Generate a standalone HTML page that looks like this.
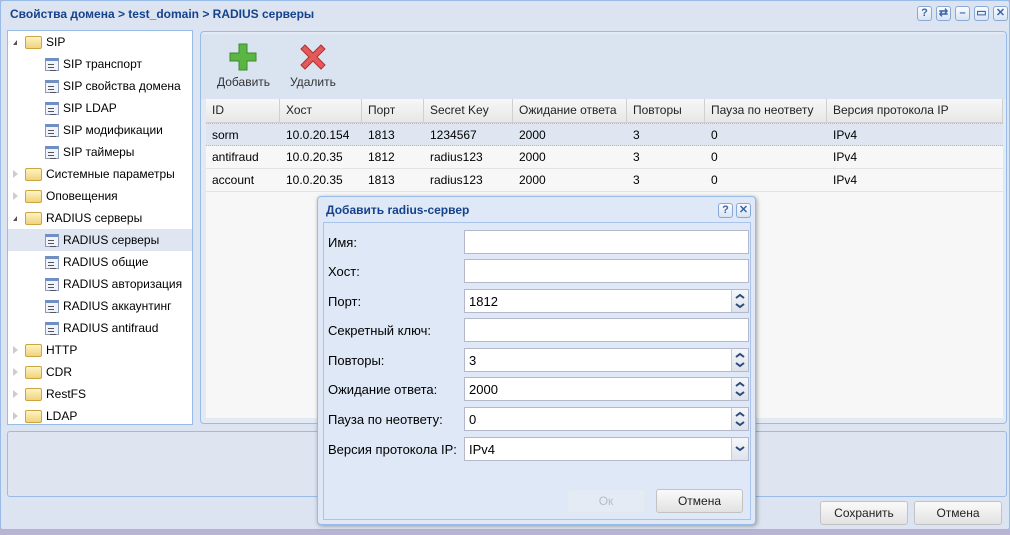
<!DOCTYPE html>
<html><head><meta charset="utf-8"><style>
*{box-sizing:border-box;margin:0;padding:0}
body{width:1010px;height:535px;overflow:hidden;background:#b9b4d4;font-family:"Liberation Sans",sans-serif;font-size:12px;color:#000;position:relative}
.a{position:absolute}
.win{left:0;top:0;width:1010px;height:530px;background:#dbe4f0;border:1px solid #99bbe8;border-radius:3px}
.title{left:10px;top:7px;font-weight:bold;color:#15428b;font-size:12px}
.tb{top:6px;width:15px;height:15px;border:1px solid #8aa8d6;border-radius:3px;background:linear-gradient(#fafcff,#d8e4f4);color:#3c64a6;font-size:11px;font-weight:bold;text-align:center;line-height:13px}
.tree{left:7px;top:30px;width:186px;height:395px;background:#fff;border:1px solid #99bbe8}
.tr{position:absolute;left:0;width:184px;height:22px;line-height:22px;font-size:12px}
.tri{position:absolute;left:5px;top:8px;width:0;height:0}
.fold{position:absolute;left:17px;top:5px;width:17px;height:13px;background:linear-gradient(#fff4c4,#f1d27a);border:1px solid #c9a544;border-radius:2px}
.leaf{position:absolute;left:37px;top:5px;width:14px;height:13px;background:#f0f4fa;border:1px solid #8a9ab8;border-top:3px solid #6f8fc4}
.leaf:after{content:"";position:absolute;left:2px;top:3px;width:6px;height:1px;background:#555;box-shadow:0 3px 0 #555,2px 6px 0 #555}
.right{left:200px;top:31px;width:807px;height:393px;background:#e3eaf4;border:1px solid #99bbe8;border-radius:4px}
.grid{left:206px;top:99px;width:797px;height:319px;background:#f7f7f7}
.gh{position:absolute;top:0;height:24px;line-height:23px;padding-left:6px;background:linear-gradient(#f7f7f7,#e7e7e7);border-right:1px solid #d0d0d0;border-bottom:1px solid #d0d0d0;color:#222}
.gr{position:absolute;left:0;width:797px;height:23px;line-height:22px;border-bottom:1px solid #e3e3e3}
.gr span{position:absolute;top:0}
.bot{left:7px;top:431px;width:1000px;height:66px;background:#dee5f0;border:1px solid #99bbe8;border-radius:3px}
.btn{height:24px;border:1px solid #c2c2c2;border-radius:3px;background:linear-gradient(#fafafa,#e2e2e2);text-align:center;line-height:22px;color:#222}
.dlg{left:317px;top:196px;width:439px;height:329px;background:#dfe8f6;border:1px solid #99bbe8;border-radius:4px;box-shadow:1px 1px 4px rgba(0,0,0,.35)}
.dl{position:absolute;left:10px;font-size:13px}
.in{position:absolute;left:146px;width:285px;height:24px;background:#fff;border:1px solid #b5b8c8}
.in span{position:absolute;left:4px;top:4px;font-size:13px}
.sp{position:absolute;right:0;top:0;width:17px;height:22px;background:linear-gradient(#f5f7fb,#dde3ec);border-left:1px solid #c5ccd6}
</style></head><body>
<div class="a win"></div>
<div class="a title">Свойства домена &gt; test_domain &gt; RADIUS серверы</div>
<div class="a tb" style="left:917px">?</div>
<div class="a tb" style="left:936px">⇄</div>
<div class="a tb" style="left:955px">–</div>
<div class="a tb" style="left:974px">▭</div>
<div class="a tb" style="left:993px">✕</div>

<div class="a tree">
<div class="tr" style="top:0"><span class="tri" style="border-left:4px solid transparent;border-bottom:5px solid #555;top:9px"></span><span class="fold"></span><span style="position:absolute;left:38px">SIP</span></div>
<div class="tr" style="top:22px"><span class="leaf"></span><span style="position:absolute;left:55px">SIP транспорт</span></div>
<div class="tr" style="top:44px"><span class="leaf"></span><span style="position:absolute;left:55px">SIP свойства домена</span></div>
<div class="tr" style="top:66px"><span class="leaf"></span><span style="position:absolute;left:55px">SIP LDAP</span></div>
<div class="tr" style="top:88px"><span class="leaf"></span><span style="position:absolute;left:55px">SIP модификации</span></div>
<div class="tr" style="top:110px"><span class="leaf"></span><span style="position:absolute;left:55px">SIP таймеры</span></div>
<div class="tr" style="top:132px"><span class="tri" style="border-top:4px solid transparent;border-bottom:4px solid transparent;border-left:5px solid #ccc;top:7px"></span><span class="fold"></span><span style="position:absolute;left:38px">Системные параметры</span></div>
<div class="tr" style="top:154px"><span class="tri" style="border-top:4px solid transparent;border-bottom:4px solid transparent;border-left:5px solid #ccc;top:7px"></span><span class="fold"></span><span style="position:absolute;left:38px">Оповещения</span></div>
<div class="tr" style="top:176px"><span class="tri" style="border-left:4px solid transparent;border-bottom:5px solid #555;top:9px"></span><span class="fold"></span><span style="position:absolute;left:38px">RADIUS серверы</span></div>
<div class="tr" style="top:198px;background:#dfe6f2"><span class="leaf"></span><span style="position:absolute;left:55px">RADIUS серверы</span></div>
<div class="tr" style="top:220px"><span class="leaf"></span><span style="position:absolute;left:55px">RADIUS общие</span></div>
<div class="tr" style="top:242px"><span class="leaf"></span><span style="position:absolute;left:55px">RADIUS авторизация</span></div>
<div class="tr" style="top:264px"><span class="leaf"></span><span style="position:absolute;left:55px">RADIUS аккаунтинг</span></div>
<div class="tr" style="top:286px"><span class="leaf"></span><span style="position:absolute;left:55px">RADIUS antifraud</span></div>
<div class="tr" style="top:308px"><span class="tri" style="border-top:4px solid transparent;border-bottom:4px solid transparent;border-left:5px solid #ccc;top:7px"></span><span class="fold"></span><span style="position:absolute;left:38px">HTTP</span></div>
<div class="tr" style="top:330px"><span class="tri" style="border-top:4px solid transparent;border-bottom:4px solid transparent;border-left:5px solid #ccc;top:7px"></span><span class="fold"></span><span style="position:absolute;left:38px">CDR</span></div>
<div class="tr" style="top:352px"><span class="tri" style="border-top:4px solid transparent;border-bottom:4px solid transparent;border-left:5px solid #ccc;top:7px"></span><span class="fold"></span><span style="position:absolute;left:38px">RestFS</span></div>
<div class="tr" style="top:374px"><span class="tri" style="border-top:4px solid transparent;border-bottom:4px solid transparent;border-left:5px solid #ccc;top:7px"></span><span class="fold"></span><span style="position:absolute;left:38px">LDAP</span></div>
</div>

<div class="a right"></div>
<div class="a" style="left:201px;top:34px;width:805px;height:65px;background:#dae3f0"></div>
<svg class="a" style="left:229px;top:43px" width="28" height="28" viewBox="0 0 28 28"><path d="M10 1h8v9h9v8h-9v9h-8v-9H1v-8h9z" fill="#5bb545" stroke="#3d8a2c"/></svg>
<svg class="a" style="left:299px;top:43px" width="28" height="28" viewBox="0 0 28 28"><path d="M2 6l4-4 8 8 8-8 4 4-8 8 8 8-4 4-8-8-8 8-4-4 8-8z" fill="#e25a5a" stroke="#b03030"/></svg>
<div class="a" style="left:217px;top:75px;font-size:12px;color:#333">Добавить</div>
<div class="a" style="left:290px;top:75px;font-size:12px;color:#333">Удалить</div>

<div class="a grid">
<div class="gh" style="left:0;width:74px">ID</div>
<div class="gh" style="left:74px;width:82px">Хост</div>
<div class="gh" style="left:156px;width:62px">Порт</div>
<div class="gh" style="left:218px;width:89px">Secret Key</div>
<div class="gh" style="left:307px;width:114px">Ожидание ответа</div>
<div class="gh" style="left:421px;width:78px">Повторы</div>
<div class="gh" style="left:499px;width:122px">Пауза по неответу</div>
<div class="gh" style="left:621px;width:176px">Версия протокола IP</div>
<div class="gr" style="top:24px;background:#dfe6f2;border-top:1px dotted #a3bae9;border-bottom:1px dotted #a3bae9"><span style="left:6px">sorm</span><span style="left:80px">10.0.20.154</span><span style="left:162px">1813</span><span style="left:224px">1234567</span><span style="left:313px">2000</span><span style="left:427px">3</span><span style="left:505px">0</span><span style="left:627px">IPv4</span></div>
<div class="gr" style="top:47px"><span style="left:6px">antifraud</span><span style="left:80px">10.0.20.35</span><span style="left:162px">1812</span><span style="left:224px">radius123</span><span style="left:313px">2000</span><span style="left:427px">3</span><span style="left:505px">0</span><span style="left:627px">IPv4</span></div>
<div class="gr" style="top:70px"><span style="left:6px">account</span><span style="left:80px">10.0.20.35</span><span style="left:162px">1813</span><span style="left:224px">radius123</span><span style="left:313px">2000</span><span style="left:427px">3</span><span style="left:505px">0</span><span style="left:627px">IPv4</span></div>
</div>

<div class="a bot"></div>
<div class="a btn" style="left:820px;top:501px;width:88px">Сохранить</div>
<div class="a btn" style="left:914px;top:501px;width:88px">Отмена</div>

<div class="a dlg">
<div style="position:absolute;left:8px;top:6px;font-weight:bold;color:#15428b;font-size:12px">Добавить radius-сервер</div>
<div class="tb" style="position:absolute;left:400px;top:6px">?</div>
<div class="tb" style="position:absolute;left:418px;top:6px">✕</div>
<div style="position:absolute;left:5px;top:25px;width:428px;height:298px;border:1px solid #a8c4ec;background:#dfe8f6"></div>
<div class="dl" style="top:38px">Имя:</div><div class="in" style="top:33px"></div>
<div class="dl" style="top:67px">Хост:</div><div class="in" style="top:62px"></div>
<div class="dl" style="top:97px">Порт:</div><div class="in" style="top:92px"><span>1812</span><div class="sp"><svg width="16" height="22"><path d="M4 8l4-3 4 3M4 14l4 3 4-3" fill="none" stroke="#2c4a7a" stroke-width="2"/></svg></div></div>
<div class="dl" style="top:126px">Секретный ключ:</div><div class="in" style="top:121px"></div>
<div class="dl" style="top:156px">Повторы:</div><div class="in" style="top:151px"><span>3</span><div class="sp"><svg width="16" height="22"><path d="M4 8l4-3 4 3M4 14l4 3 4-3" fill="none" stroke="#2c4a7a" stroke-width="2"/></svg></div></div>
<div class="dl" style="top:185px">Ожидание ответа:</div><div class="in" style="top:180px"><span>2000</span><div class="sp"><svg width="16" height="22"><path d="M4 8l4-3 4 3M4 14l4 3 4-3" fill="none" stroke="#2c4a7a" stroke-width="2"/></svg></div></div>
<div class="dl" style="top:215px">Пауза по неответу:</div><div class="in" style="top:210px"><span>0</span><div class="sp"><svg width="16" height="22"><path d="M4 8l4-3 4 3M4 14l4 3 4-3" fill="none" stroke="#2c4a7a" stroke-width="2"/></svg></div></div>
<div class="dl" style="top:245px">Версия протокола IP:</div><div class="in" style="top:240px"><span>IPv4</span><div class="sp"><svg width="16" height="22"><path d="M4 9l4 3 4-3" fill="none" stroke="#2c4a7a" stroke-width="2"/></svg></div></div>
<div class="btn" style="position:absolute;left:249px;top:292px;width:78px;border-color:#e3e8f0;background:#e4ebf5;color:#b8bcc4">Ок</div>
<div class="btn" style="position:absolute;left:338px;top:292px;width:87px">Отмена</div>
</div>
</body></html>
